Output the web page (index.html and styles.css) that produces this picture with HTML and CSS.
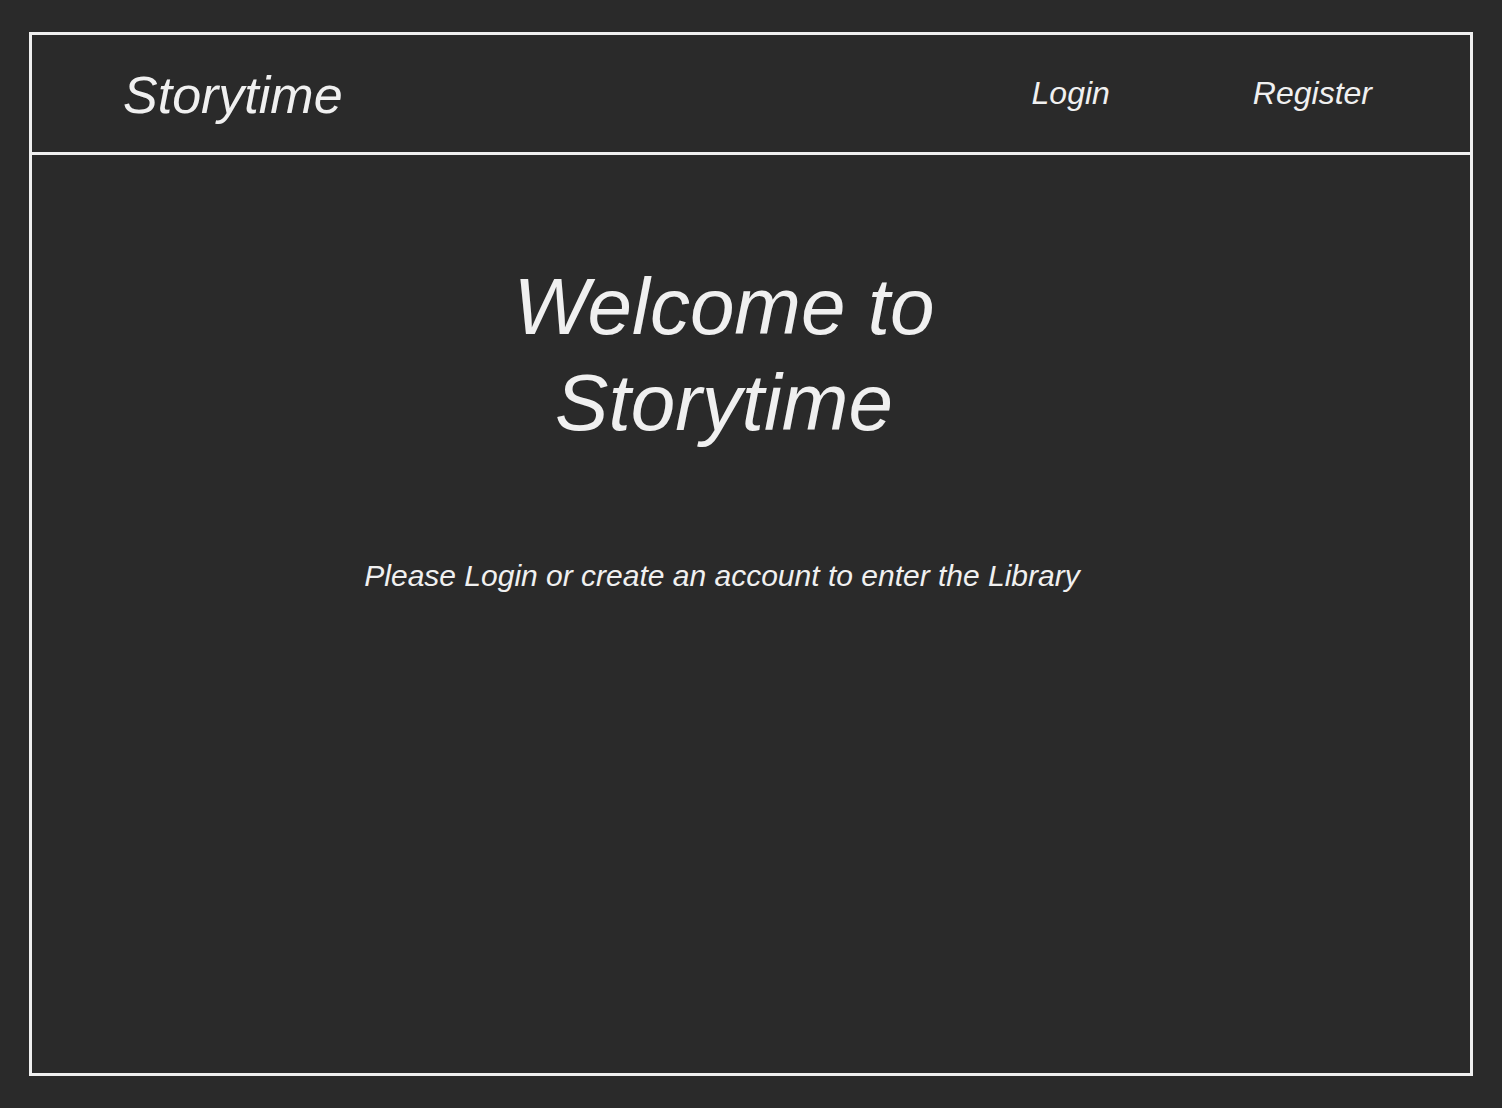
FILE: index.html
```html
<!DOCTYPE html>
<html lang="en">
<head>
<meta charset="utf-8">
<title>Storytime</title>
<link rel="stylesheet" href="styles.css">
</head>
<body>
<div class="frame">
  <header class="site-header">
    <a class="logo" href="#">Storytime</a>
    <nav class="nav">
      <a class="nav-link" href="#">Login</a>
      <a class="nav-link" href="#">Register</a>
    </nav>
  </header>
  <main class="main">
    <h1 class="title">Welcome to Storytime</h1>
    <p class="subtitle">Please Login or create an account to enter the Library</p>
  </main>
</div>
</body>
</html>
```

FILE: styles.css
```css
html, body {
  margin: 0;
  padding: 0;
  background: #2a2a2a;
}
body {
  font-family: "Liberation Sans", Arial, Helvetica, sans-serif;
  font-style: italic;
  color: #f0f0f0;
  padding: 32px 29px;
}
.frame {
  box-sizing: border-box;
  height: 1044px;
  border: 3px solid #efefef;
  display: flex;
  flex-direction: column;
}
.site-header {
  box-sizing: border-box;
  height: 120px;
  border-bottom: 3px solid #efefef;
  display: flex;
  align-items: center;
  justify-content: space-between;
  padding: 0 98px 0 91px;
}
.logo {
  font-size: 52px;
  color: #f0f0f0;
  text-decoration: none;
  position: relative;
  top: 1px;
}
.nav {
  display: flex;
  gap: 143px;
}
.nav-link {
  font-size: 32px;
  color: #f0f0f0;
  text-decoration: none;
}
.main {
  display: flex;
  flex-direction: column;
  align-items: center;
  padding-right: 54px;
}
.title {
  font-size: 80px;
  font-weight: normal;
  line-height: 96px;
  width: 520px;
  text-align: center;
  margin: 104px 0 0;
}
.subtitle {
  font-size: 30px;
  margin: 108px 4px 0 0;
  text-align: center;
}
```
